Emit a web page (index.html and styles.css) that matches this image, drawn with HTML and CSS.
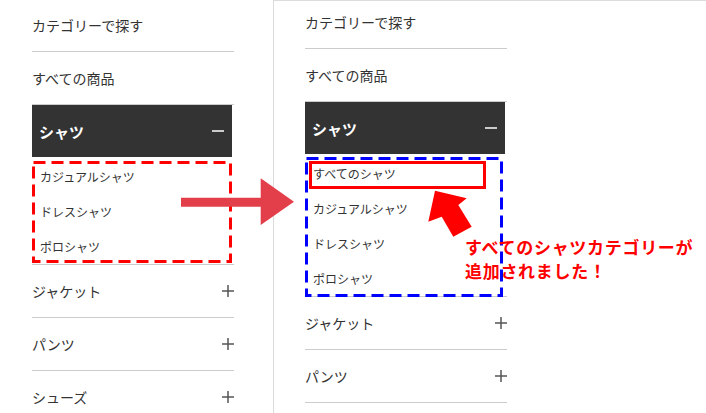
FILE: index.html
```html
<!DOCTYPE html>
<html lang="ja">
  <head>
    <meta charset="UTF-8" />
    <meta name="viewport" content="width=device-width, initial-scale=1.0" />
    <title>カテゴリーメニュー 比較</title>
    <link rel="stylesheet" href="styles.css">
  </head>

  <body>
    <div class="pagina">
      <!-- Antes -->
      <section class="painel painel-antes">
        <ul class="menu">
          <li class="menu-item">カテゴリーで探す</li>
          <li class="menu-item">すべての商品</li>
          <li class="menu-barra">
            <span>シャツ</span>
            <svg class="icone" viewBox="0 0 12 12"><path d="M0 6H12" stroke="#fff" stroke-width="1.5" /></svg>
          </li>
          <li class="sub-lista">
            <ul>
              <li class="sub-item">カジュアルシャツ</li>
              <li class="sub-item">ドレスシャツ</li>
              <li class="sub-item">ポロシャツ</li>
            </ul>
            <svg class="moldura moldura-vermelha" viewBox="0 0 200 102">
              <rect x="1.5" y="1.5" width="197" height="99" fill="none" stroke="#ff0000" stroke-width="3" stroke-dasharray="12 6" />
            </svg>
          </li>
          <li class="menu-item">
            <span>ジャケット</span>
            <svg class="icone" viewBox="0 0 12 12"><path d="M0 6H12M6 0V12" stroke="#555" stroke-width="1.5" /></svg>
          </li>
          <li class="menu-item">
            <span>パンツ</span>
            <svg class="icone" viewBox="0 0 12 12"><path d="M0 6H12M6 0V12" stroke="#555" stroke-width="1.5" /></svg>
          </li>
          <li class="menu-item">
            <span>シューズ</span>
            <svg class="icone" viewBox="0 0 12 12"><path d="M0 6H12M6 0V12" stroke="#555" stroke-width="1.5" /></svg>
          </li>
        </ul>
      </section>

      <!-- Depois -->
      <section class="painel painel-depois">
        <ul class="menu">
          <li class="menu-item">カテゴリーで探す</li>
          <li class="menu-item">すべての商品</li>
          <li class="menu-barra">
            <span>シャツ</span>
            <svg class="icone" viewBox="0 0 12 12"><path d="M0 6H12" stroke="#fff" stroke-width="1.5" /></svg>
          </li>
          <li class="sub-lista">
            <ul>
              <li class="sub-item novo">すべてのシャツ</li>
              <li class="sub-item">カジュアルシャツ</li>
              <li class="sub-item">ドレスシャツ</li>
              <li class="sub-item">ポロシャツ</li>
            </ul>
            <svg class="moldura moldura-azul" viewBox="0 0 198 140">
              <rect x="1.5" y="1.5" width="195" height="137" fill="none" stroke="#0000ff" stroke-width="3" stroke-dasharray="12 6" />
            </svg>
          </li>
          <li class="menu-item">
            <span>ジャケット</span>
            <svg class="icone" viewBox="0 0 12 12"><path d="M0 6H12M6 0V12" stroke="#555" stroke-width="1.5" /></svg>
          </li>
          <li class="menu-item">
            <span>パンツ</span>
            <svg class="icone" viewBox="0 0 12 12"><path d="M0 6H12M6 0V12" stroke="#555" stroke-width="1.5" /></svg>
          </li>
        </ul>
      </section>

      <!-- Anotações -->
      <svg class="seta-direita" viewBox="0 0 116 50">
        <polygon points="1,20.7 80.7,20.7 80.7,1.3 114,24.7 80.7,48 80.7,29.7 1,29.7" fill="#e33f4a" />
      </svg>
      <svg class="seta-cima" viewBox="0 0 50 52">
        <polygon points="10,2.7 41.7,10.3 33.3,17 46.7,38.7 28.3,48.7 16.7,28.7 3.3,33.7" fill="#ff0000" />
      </svg>
      <p class="nota">すべてのシャツカテゴリーが<br />追加されました！</p>
    </div>
  </body>
</html>
```

FILE: styles.css
```css
body {
  margin: 0;
  padding: 0;
  background-color: #fff;
  font-family: "Noto Sans CJK JP", "Noto Sans", sans-serif;
  color: #333;
}

.pagina {
  position: relative;
  display: flex;
  width: 706px;
  height: 413px;
  overflow: hidden;
}

ul {
  list-style: none;
  margin: 0;
  padding: 0;
}

.painel {
  height: 413px;
  overflow: hidden;
}

.painel-antes {
  width: 273px;
  padding-left: 32px;
  box-sizing: border-box;
}

.painel-antes .menu {
  margin-top: -1px;
}

.painel-depois {
  flex: 1;
  padding-left: 31px;
  border-left: 1px solid #dcdcdc;
  border-top: 1px solid #dcdcdc;
  box-sizing: border-box;
}

.painel-depois .menu {
  margin-top: -5px;
}

.menu {
  width: 202px;
}

.menu-item {
  display: flex;
  align-items: center;
  justify-content: space-between;
  height: 52px;
  border-bottom: 1px solid #cccccc;
  font-size: 14px;
}

.icone {
  width: 12px;
  height: 12px;
}

.menu-barra {
  display: flex;
  align-items: center;
  justify-content: space-between;
  width: 200px;
  height: 52px;
  padding: 0 8px 0 7px;
  box-sizing: border-box;
  background-color: #333333;
  color: #fff;
  font-size: 15px;
  font-weight: bold;
}

.sub-lista {
  position: relative;
  padding-top: 2px;
  border-bottom: 1px solid #cccccc;
}

.sub-item {
  position: relative;
  display: flex;
  align-items: center;
  height: 35px;
  padding-left: 8px;
  font-size: 12px;
}

/* destaque do item novo */
.sub-item.novo::after {
  content: "";
  position: absolute;
  left: 4px;
  top: 5px;
  width: 177px;
  height: 28px;
  border: 3px solid #ff0000;
  box-sizing: border-box;
}

.moldura {
  position: absolute;
  left: 0;
}

.moldura-vermelha {
  top: 4px;
  width: 200px;
  height: 102px;
}

.moldura-azul {
  top: 3px;
  width: 198px;
  height: 140px;
}

.seta-direita {
  position: absolute;
  left: 180px;
  top: 177px;
  width: 116px;
  height: 50px;
}

.seta-cima {
  position: absolute;
  left: 425px;
  top: 188px;
  width: 50px;
  height: 52px;
}

.nota {
  position: absolute;
  left: 465px;
  top: 235px;
  margin: 0;
  font-size: 17px;
  font-weight: bold;
  line-height: 24px;
  letter-spacing: 0.7px;
  color: #ff0000;
}
```
